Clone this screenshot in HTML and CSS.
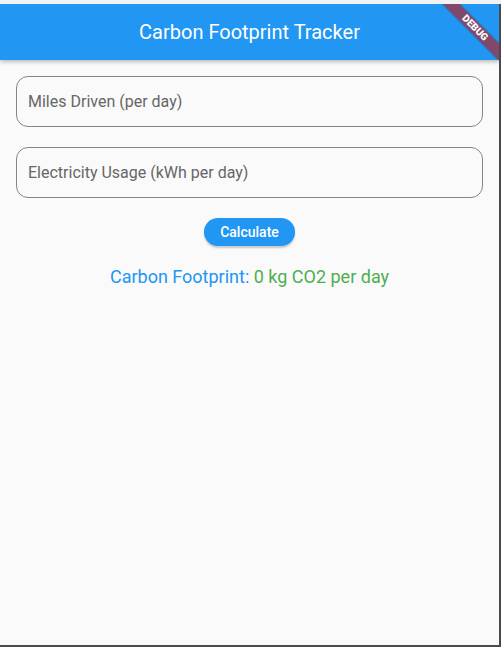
FILE: index.html
```html
<!DOCTYPE html>
<html>
<head>
<meta charset="utf-8">
<link rel="stylesheet" href="styles.css">
</head>
<body>
<div class="frame">
  <div class="app">
    <header class="appbar">Carbon Footprint Tracker</header>
    <main class="content">
      <div class="field"><span class="label">Miles Driven (per day)</span></div>
      <div class="field"><span class="label">Electricity Usage (kWh per day)</span></div>
      <button class="btn">Calculate</button>
      <p class="result"><span class="blue">Carbon Footprint: </span><span class="green">0 kg CO2 per day</span></p>
    </main>
    <div class="banner">DEBUG</div>
  </div>
</div>
</body>
</html>
```
FILE: styles.css
```css
html, body {
  margin: 0;
  padding: 0;
  width: 501px;
  height: 647px;
  overflow: hidden;
  background: #f2f2f2;
}
.frame {
  padding-top: 4px;
  height: 647px;
  box-sizing: border-box;
}
.app {
  position: relative;
  width: 501px;
  height: 643px;
  box-sizing: border-box;
  border-right: 2px solid #4a4a4a;
  border-bottom: 2px solid #4a4a4a;
  background: #fafafa;
  overflow: hidden;
  font-family: Roboto, "Liberation Sans", sans-serif;
  display: flex;
  flex-direction: column;
}
.appbar {
  height: 56px;
  flex: none;
  background: #2196f3;
  color: #fff;
  font-size: 20px;
  display: flex;
  align-items: center;
  justify-content: center;
  box-shadow: 0 2px 4px rgba(0,0,0,0.25);
  position: relative;
  z-index: 1;
}
.content {
  padding: 16px;
  display: flex;
  flex-direction: column;
  align-items: center;
}
.field {
  align-self: stretch;
  height: 51px;
  box-sizing: border-box;
  border: 1px solid #858585;
  border-radius: 12px;
  padding-left: 11px;
  display: flex;
  align-items: center;
  margin-bottom: 20px;
}
.label {
  font-size: 16px;
  color: #666;
}
.btn {
  height: 28px;
  padding: 0 16px;
  border: none;
  border-radius: 14px;
  background: #2196f3;
  color: #fff;
  font-family: Roboto, "Liberation Sans", sans-serif;
  font-size: 14px;
  font-weight: 500;
  box-shadow: 0 2px 2px rgba(0,0,0,0.2);
}
.result {
  margin: 20px 0 0;
  font-size: 18px;
  line-height: 21px;
}
.blue { color: #2196f3; }
.green { color: #4caf50; }
.banner {
  position: absolute;
  left: 435px;
  top: 18px;
  width: 80px;
  height: 12px;
  line-height: 12px;
  transform: rotate(45deg);
  background: rgba(183, 28, 28, 0.63);
  color: #fff;
  font-size: 10px;
  font-weight: 900;
  text-align: center;
  letter-spacing: 0;
  z-index: 2;
  box-shadow: 0 0 2px rgba(0,0,0,0.3);
}
```
